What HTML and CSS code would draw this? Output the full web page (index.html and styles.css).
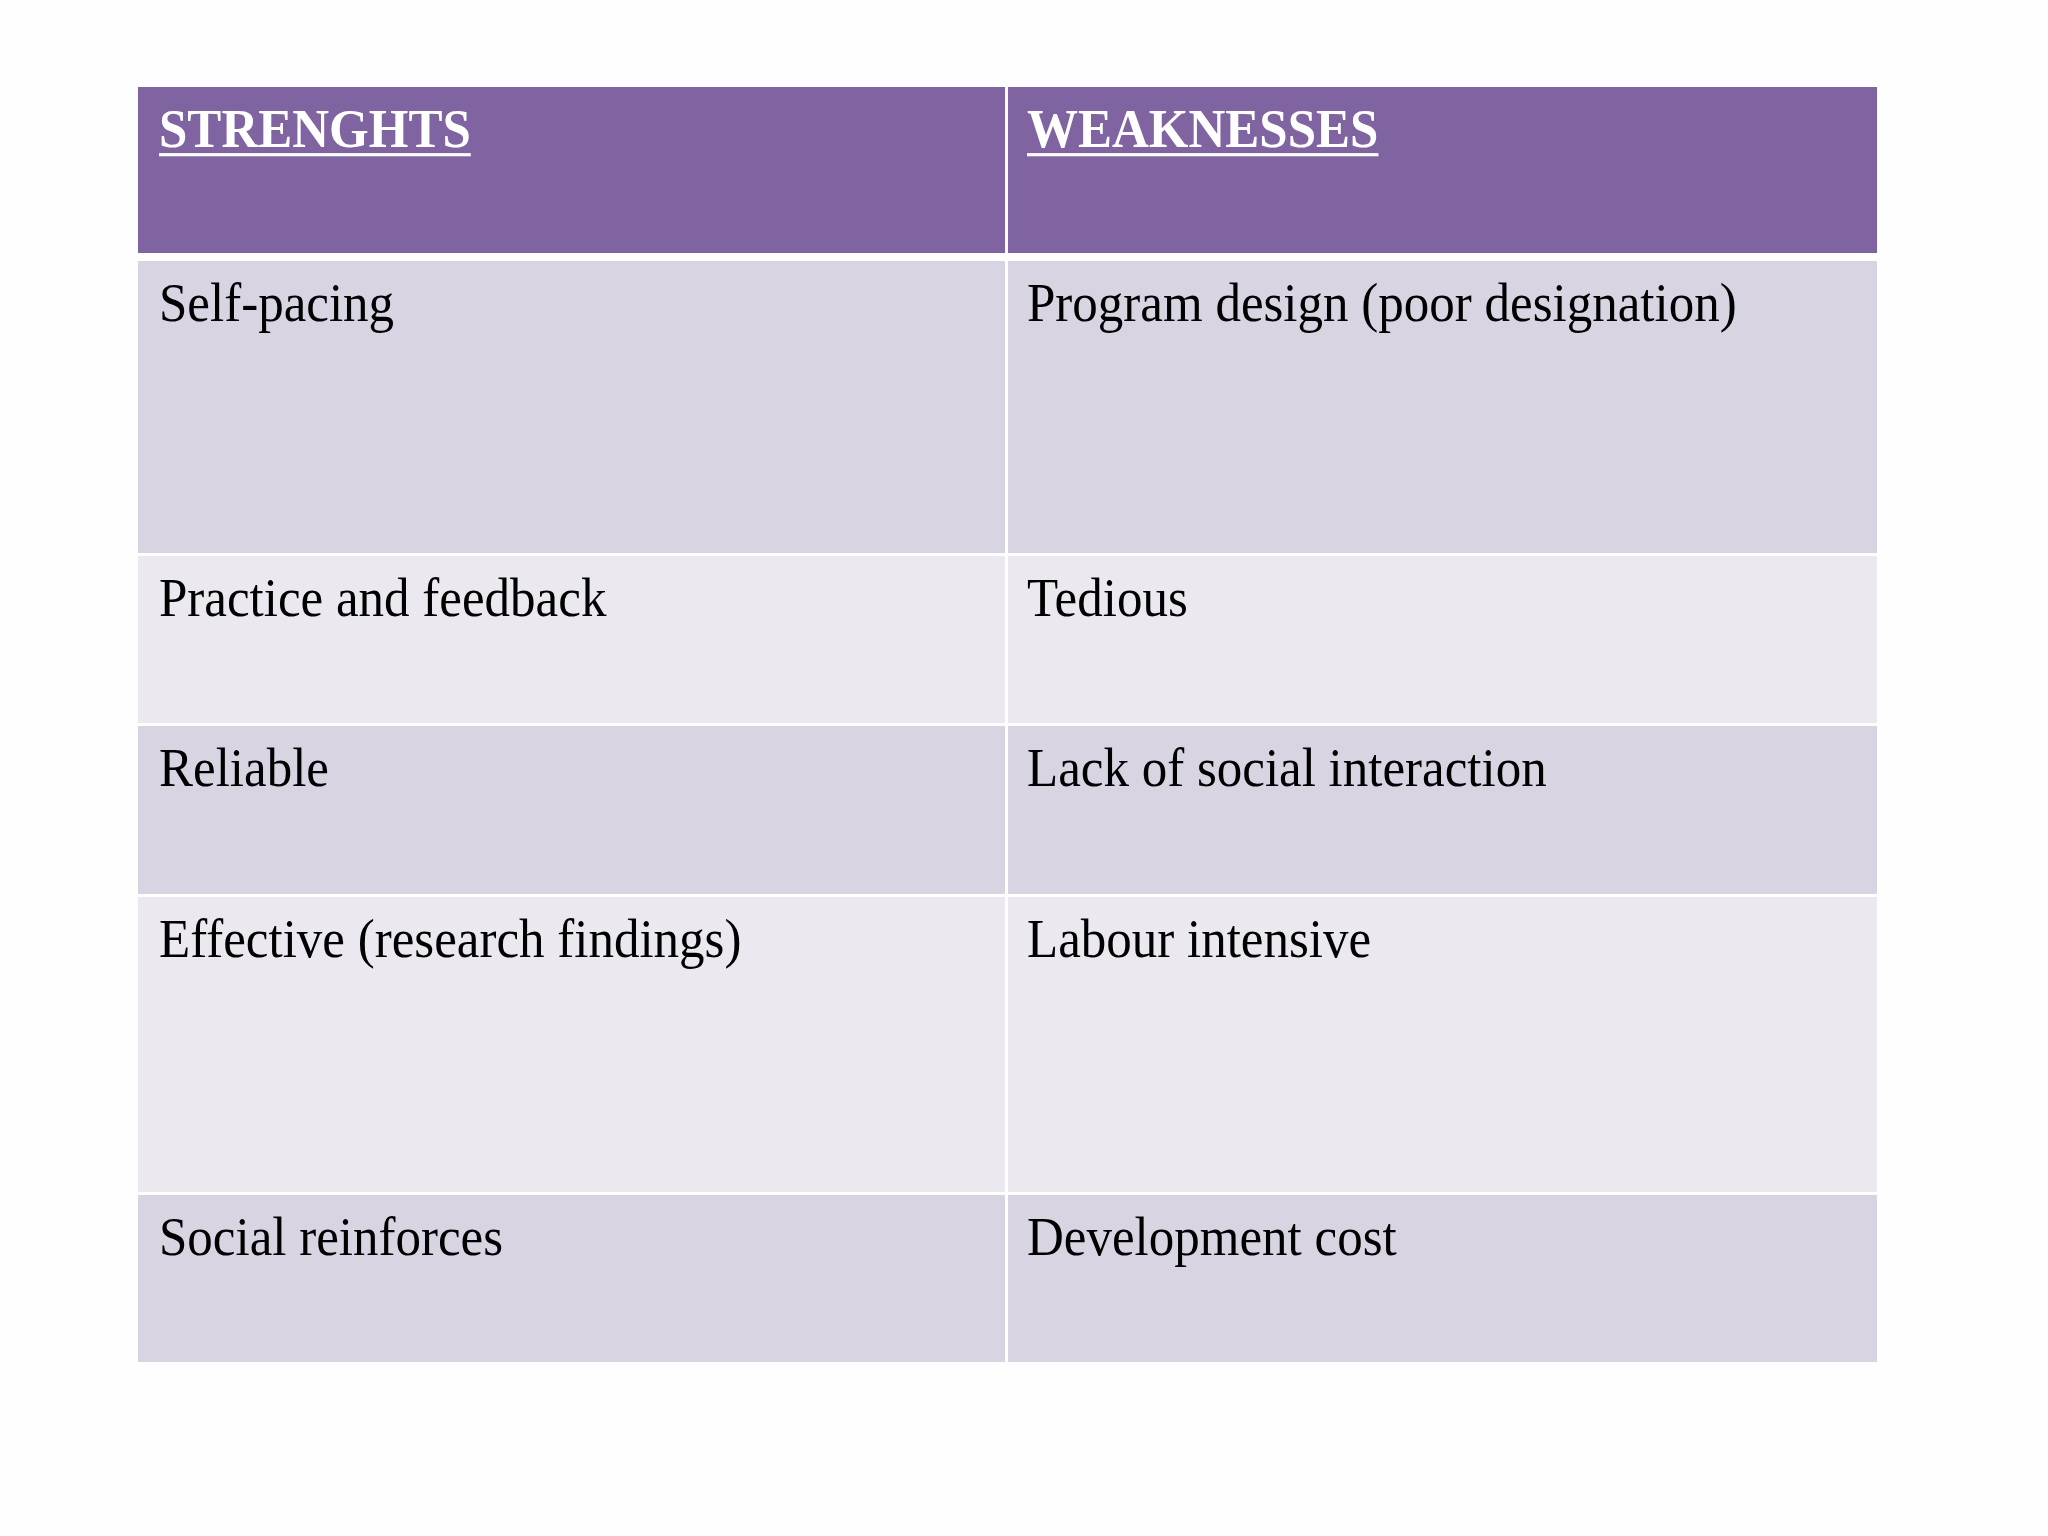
FILE: index.html
```html
<!DOCTYPE html>
<html lang="en">
<head>
<meta charset="utf-8">
<title>Strengths and Weaknesses</title>
<link rel="stylesheet" href="styles.css">
</head>
<body>
<main class="slide">
  <div class="grid">
    <div class="cell head first"><span class="t u">STRENGHTS</span></div>
    <div class="cell head second"><span class="t u">WEAKNESSES</span></div>

    <div class="cell band1 first"><span class="t">Self-pacing</span></div>
    <div class="cell band1 second"><span class="t">Program design (poor designation)</span></div>

    <div class="cell band2 first"><span class="t">Practice and feedback</span></div>
    <div class="cell band2 second"><span class="t">Tedious</span></div>

    <div class="cell band1 first"><span class="t">Reliable</span></div>
    <div class="cell band1 second"><span class="t">Lack of social interaction</span></div>

    <div class="cell band2 first"><span class="t">Effective (research findings)</span></div>
    <div class="cell band2 second"><span class="t">Labour intensive</span></div>

    <div class="cell band1 first"><span class="t">Social reinforces</span></div>
    <div class="cell band1 second"><span class="t">Development cost</span></div>
  </div>
</main>
</body>
</html>
```

FILE: styles.css
```css
html, body {
  margin: 0;
  padding: 0;
  background: #fefefe;
}

.slide {
  width: 2048px;
  height: 1536px;
  padding: 87px 0 0 138px;
  box-sizing: border-box;
  font-family: "Liberation Serif", "Times New Roman", serif;
}

.grid {
  display: grid;
  grid-template-columns: 867px 869px;
  grid-template-rows: 171px 292px 167px 168px 295px 167px;
  column-gap: 3px;
  row-gap: 3px;
}

.cell {
  font-size: 51px;
  line-height: 58px;
  color: #000;
  padding-top: 11px;
  box-sizing: border-box;
}

.first { padding-left: 21px; }
.second { padding-left: 19px; }

.t {
  display: inline-block;
  transform: scaleY(1.06);
  transform-origin: 0 0;
}

.head {
  background: #8064a2;
  color: #fff;
  font-weight: bold;
  height: 166px;
}

.u {
  text-decoration: underline;
  text-decoration-thickness: 3px;
  text-underline-offset: 6px;
}

.band1 { background: #d8d4e2; }
.band2 { background: #ebe9ef; }
```
